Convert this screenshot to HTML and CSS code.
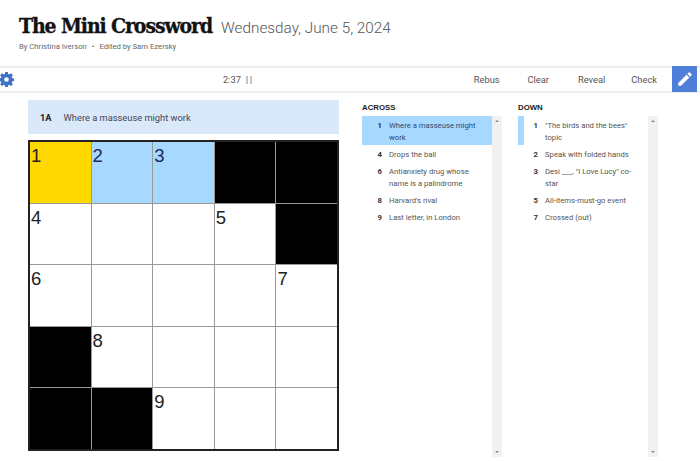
FILE: index.html
```html
<!DOCTYPE html>
<html lang="en">
<head>
<meta charset="utf-8">
<title>The Mini Crossword</title>
<link rel="stylesheet" href="styles.css">
</head>
<body>
<header class="head">
  <div class="title-row">
    <h1 class="title">The Mini Crossword</h1>
    <span class="date">Wednesday, June 5, 2024</span>
  </div>
  <div class="byline"><span>By Christina Iverson</span><span class="dot">•</span><span>Edited by Sam Ezersky</span></div>
</header>
<nav class="toolbar">
  <svg class="gear" viewBox="0 0 16 16" width="15" height="15" aria-hidden="true"><path fill="#3f72c4" fill-rule="evenodd" d="M6.600 0h2.800l.4 2.200 1.100.5L12.800 1.400l2 2-1.300 1.900.5 1.100 2 .4v2.800l-2 .4-.5 1.100 1.300 1.900-2 2-1.900-1.300-1.100.5-.4 2H6.600l-.4-2-1.100-.5-1.900 1.300-2-2 1.300-1.900-.5-1.100-2-.4V6.800l2-.4.5-1.100L1.200 3.400l2-2 1.900 1.300 1.100-.5zM8 5.500a2.500 2.500 0 1 0 0 5 2.500 2.500 0 0 0 0-5z"/></svg>
  <div class="timer"><span>2:37</span><span class="pause"><i></i><i></i></span></div>
  <div class="actions">
    <span class="act act-rebus">Rebus</span>
    <span class="act act-clear">Clear</span>
    <span class="act act-reveal">Reveal</span>
    <span class="act act-check">Check</span>
    <span class="pencil"><svg viewBox="0 0 24 24" width="18" height="18" aria-hidden="true"><path fill="#fff" d="M3 17.250V21h3.750L17.810 9.940l-3.750-3.750L3 17.250zM20.710 7.040a1 1 0 0 0 0-1.410l-2.340-2.340a1 1 0 0 0-1.410 0l-1.830 1.830 3.750 3.750 1.830-1.830z"/></svg></span>
  </div>
</nav>
<main class="main">
  <section class="board">
    <div class="clue-bar"><b>1A</b><span>Where a masseuse might work</span></div>
    <div class="grid">
      <div class="cell sel">1</div><div class="cell word">2</div><div class="cell word">3</div><div class="cell blk"></div><div class="cell blk"></div>
      <div class="cell">4</div><div class="cell"></div><div class="cell"></div><div class="cell">5</div><div class="cell blk"></div>
      <div class="cell">6</div><div class="cell"></div><div class="cell"></div><div class="cell"></div><div class="cell">7</div>
      <div class="cell blk"></div><div class="cell">8</div><div class="cell"></div><div class="cell"></div><div class="cell"></div>
      <div class="cell blk"></div><div class="cell blk"></div><div class="cell">9</div><div class="cell"></div><div class="cell"></div>
    </div>
  </section>
  <section class="clues">
    <div class="col">
      <h2 class="col-head">ACROSS</h2>
      <div class="list-wrap">
        <ol class="list">
          <li class="clue on"><b>1</b><span>Where a masseuse might work</span></li>
          <li class="clue"><b>4</b><span>Drops the ball</span></li>
          <li class="clue"><b>6</b><span>Antianxiety drug whose name is a palindrome</span></li>
          <li class="clue"><b>8</b><span>Harvard's rival</span></li>
          <li class="clue"><b>9</b><span>Last letter, in London</span></li>
        </ol>
        <div class="scroll"><i class="up"></i><i class="down"></i></div>
      </div>
    </div>
    <div class="col">
      <h2 class="col-head">DOWN</h2>
      <div class="list-wrap">
        <ol class="list">
          <li class="clue cross"><b>1</b><span>"The birds and the bees" topic</span></li>
          <li class="clue"><b>2</b><span>Speak with folded hands</span></li>
          <li class="clue"><b>3</b><span>Desi ___, "I Love Lucy" co-star</span></li>
          <li class="clue"><b>5</b><span>All-items-must-go event</span></li>
          <li class="clue"><b>7</b><span>Crossed (out)</span></li>
        </ol>
        <div class="scroll"><i class="up"></i><i class="down"></i></div>
      </div>
    </div>
  </section>
</main>
</body>
</html>
```
FILE: styles.css
```css
* { box-sizing: border-box; }
html, body { margin: 0; padding: 0; }
body {
  width: 700px;
  height: 461px;
  overflow: hidden;
  background: #fff;
  color: #333;
  font-family: "Liberation Sans", Arial, sans-serif;
}
.head { height: 66px; padding: 13px 0 0 19px; }
.title-row { display: flex; align-items: baseline; gap: 9px; }
.title {
  margin: 0;
  font-family: "DejaVu Serif", serif;
  font-stretch: condensed;
  font-weight: 700;
  font-size: 21px;
  line-height: 25px;
  letter-spacing: -1.100px;
  -webkit-text-stroke: 0.3px #121212;
  color: #121212;
}
.date {
  font-family: Roboto, sans-serif;
  font-weight: 300;
  font-size: 15.300px;
  color: #555;
}
.byline {
  display: flex;
  gap: 5px;
  margin-top: 3px;
  font-family: Roboto, sans-serif;
  font-size: 7.700px;
  line-height: 12px;
  color: #666;
}
.toolbar {
  display: flex;
  align-items: center;
  height: 27px;
  border-top: 2px solid #eee;
  border-bottom: 2px solid #eee;
  font-family: Roboto, sans-serif;
  font-size: 9.300px;
  color: #555;
}
.gear { margin-left: -1px; flex: none; }
.timer {
  display: flex;
  align-items: center;
  gap: 5px;
  margin-left: 209px;
}
.pause { display: flex; gap: 2px; }
.pause i { display: block; width: 2px; height: 8px; background: #c4c4c4; }
.actions { display: flex; align-items: center; margin-left: auto; }
.act { display: block; }
.act-rebus { margin-right: 28px; }
.act-clear { margin-right: 29px; }
.act-reveal { margin-right: 26px; }
.act-check { margin-right: 15px; }
.pencil {
  display: flex;
  align-items: center;
  justify-content: center;
  width: 25px;
  height: 26px;
  margin-top: -1px;
  margin-right: 3px;
  background: #4f7fd8;
}
.main { display: flex; padding: 7px 0 0 28px; }
.board { width: 311px; flex: none; }
.clue-bar {
  display: flex;
  align-items: center;
  gap: 12px;
  height: 34px;
  padding-left: 12px;
  background: #d9e9f9;
  font-family: Roboto, sans-serif;
  font-size: 9.300px;
  color: #445;
}
.clue-bar b { color: #222; }
.grid {
  display: grid;
  grid-template-columns: repeat(5, 1fr);
  grid-template-rows: repeat(5, 1fr);
  gap: 1px;
  width: 311px;
  height: 311px;
  margin-top: 6px;
  border: 2px solid #222;
  background: #999;
}
.cell {
  background: #fff;
  padding: 3px 0 0 1px;
  font-size: 18.500px;
  line-height: 22px;
  color: #222;
}
.cell.sel { background: #ffd800; }
.cell.word { background: #a7d8ff; color: #1a2a50; }
.cell.blk { background: #000; }
.clues { display: flex; gap: 16px; margin-left: 23px; }
.col { width: 140px; }
.col-head {
  margin: 0;
  height: 16px;
  font-family: "Liberation Sans", sans-serif;
  font-size: 7.800px;
  font-weight: 700;
  line-height: 16px;
  color: #222;
}
.list-wrap { display: flex; height: 341px; }
.list { margin: 0; padding: 0; list-style: none; width: 130px; }
.clue {
  display: flex;
  gap: 7px;
  padding: 4px 12px 1px 0;
  font-family: Roboto, sans-serif;
  font-size: 7.700px;
  line-height: 12px;
  color: #555;
}
.clue b { width: 20px; flex: none; text-align: right; color: #333; }
.clue.on { background: #a7d8ff; color: #2c4a70; }
.clue.cross { box-shadow: inset 6px 0 0 #a7d8ff; }
.scroll {
  display: flex;
  flex-direction: column;
  justify-content: space-between;
  align-items: center;
  width: 10px;
  padding: 4px 0;
  background: #f1f1f1;
}
.scroll i { display: block; width: 0; height: 0; border-left: 2px solid transparent; border-right: 2px solid transparent; }
.scroll .up { border-bottom: 2px solid #888; }
.scroll .down { border-top: 2px solid #888; }
```
